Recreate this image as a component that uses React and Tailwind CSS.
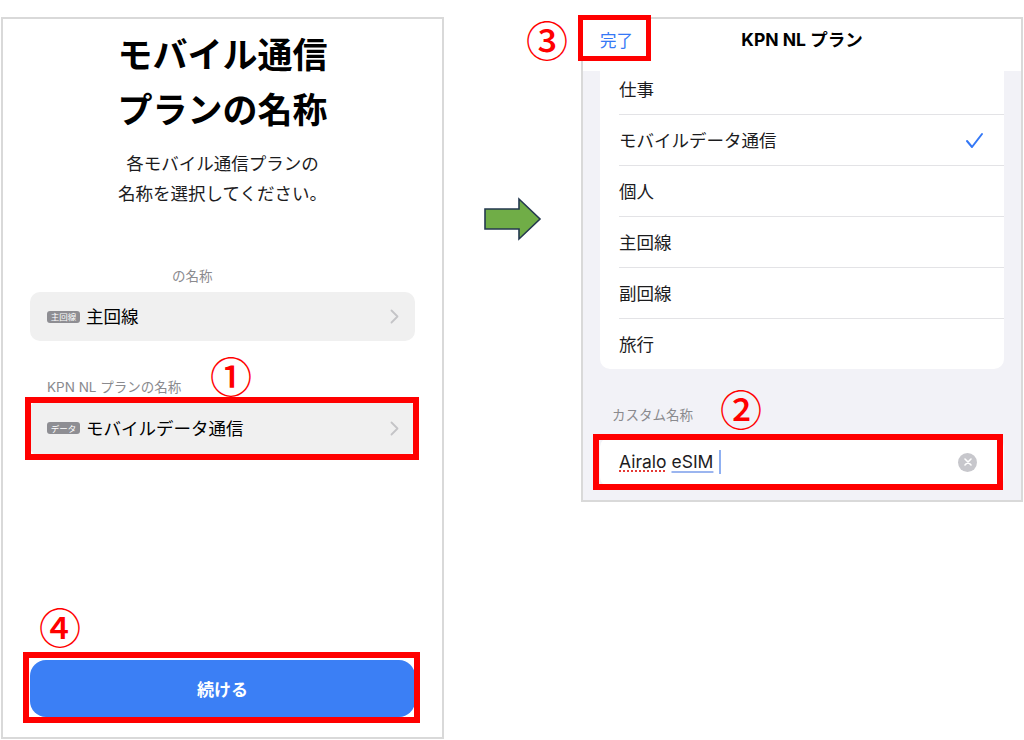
import React from "react";

const FONT = { fontFamily: 'Inter, "Noto Sans CJK JP", sans-serif' };
const JP = { fontFamily: '"Noto Sans CJK JP", sans-serif' };

function Chevron() {
  return (
    <svg width="9" height="15" viewBox="0 0 9 15" fill="none">
      <path d="M1.5 1.5 L7.5 7.5 L1.5 13.5" stroke="#c4c4c7" strokeWidth="1.8" strokeLinecap="round" strokeLinejoin="round" />
    </svg>
  );
}

function Badge({ children }) {
  return (
    <span className="inline-flex items-center justify-center h-[12px] w-[33px] rounded-[3px] bg-[#8e8e93] text-white text-[8.5px] leading-none mr-[6px]" style={JP}>
      {children}
    </span>
  );
}

function Circled({ ch, x, y }) {
  return (
    <span
      className="absolute flex items-center justify-center w-[44px] h-[44px] text-[#ff0000] text-[42px] font-medium leading-none"
      style={{ ...JP, left: x - 22, top: y - 22 }}
    >
      {ch}
    </span>
  );
}

function RedBox({ x, y, w, h, t }) {
  return (
    <div
      className="absolute border-[#ff0000]"
      style={{ left: x, top: y, width: w, height: h, borderWidth: t, borderStyle: "solid" }}
    />
  );
}

const items = ["仕事", "モバイルデータ通信", "個人", "主回線", "副回線", "旅行"];

export default function App() {
  return (
    <div className="relative w-[1024px] h-[740px] bg-white flex items-start overflow-hidden text-black" style={FONT}>
      {/* Left panel */}
      <div className="ml-[1px] mt-[17px] w-[443px] h-[722px] shrink-0 border-2 border-[#d9d9d9] flex flex-col px-[27px] pt-[6px] pb-[20px]">
        <div className="text-center font-bold text-[35px] leading-[55px]" style={JP}>
          <div>モバイル通信</div>
          <div>プランの名称</div>
        </div>
        <div className="mt-[13px] text-center text-[17.5px] leading-[30px] text-[#1c1c1e]" style={JP}>
          <div>各モバイル通信プランの</div>
          <div>名称を選択してください。</div>
        </div>
        <div className="mt-[58px] pl-[142px] text-[13.5px] leading-[18px] text-[#8a8a8e]" style={JP}>の名称</div>
        <div className="mt-[8px] h-[49px] rounded-[10px] bg-[#f0f0f0] flex items-center pl-[17px] pr-[16px]">
          <Badge>主回線</Badge>
          <span className="text-[17.5px]" style={JP}>主回線</span>
          <span className="ml-auto flex"><Chevron /></span>
        </div>
        <div className="mt-[37px] pl-[17px] text-[13.5px] leading-[18px] text-[#8a8a8e]" style={FONT}>KPN NL プランの名称</div>
        <div className="mt-[4px] h-[56px] rounded-[10px] bg-[#f0f0f0] flex items-center pl-[17px] pr-[16px]">
          <Badge>データ</Badge>
          <span className="text-[17.5px]" style={JP}>モバイルデータ通信</span>
          <span className="ml-auto flex"><Chevron /></span>
        </div>
        <div className="mt-auto h-[57px] rounded-[16px] bg-[#3b7ff5] flex items-center justify-center text-white font-bold text-[17px]" style={JP}>
          続ける
        </div>
      </div>

      {/* Arrow */}
      <div className="w-[137px] shrink-0 pl-[39px] pt-[197px]">
        <svg width="60" height="44" viewBox="0 0 60 44">
          <path d="M2 12 H36 V2 L57 22 L36 42 V32 H2 Z" fill="#70ad47" stroke="#24384f" strokeWidth="1.6" strokeLinejoin="miter" />
        </svg>
      </div>

      {/* Right panel */}
      <div className="mt-[17px] w-[442px] h-[485px] shrink-0 border-2 border-[#d9d9d9] bg-[#f2f2f7] flex flex-col">
        <div className="h-[52px] bg-white grid grid-cols-[1fr_auto_1fr] items-center pb-[10px] px-[17px]">
          <span className="text-[#3478f6] text-[16.5px]" style={JP}>完了</span>
          <span className="font-bold text-[17.5px]" style={FONT}>KPN NL プラン</span>
          <span />
        </div>
        <div className="mx-[17px] bg-white rounded-b-[10px] overflow-hidden">
          {items.map((t, i) => (
            <div key={t} className="pl-[19px]">
              <div
                className={
                  i === 0
                    ? "h-[43px] flex items-center pb-[6px] pr-[20px]"
                    : "h-[51px] flex items-center border-t border-[#e3e3e6] pr-[20px]"
                }
              >
                <span className="text-[17.5px] text-[#1c1c1e]" style={JP}>{t}</span>
                {i === 1 && (
                  <span className="ml-auto flex">
                    <svg width="19" height="17" viewBox="0 0 19 17" fill="none">
                      <path d="M2 9 L7 15 L17 2" stroke="#3478f6" strokeWidth="2" strokeLinecap="round" strokeLinejoin="round" />
                    </svg>
                  </span>
                )}
              </div>
            </div>
          ))}
        </div>
        <div className="mt-[36px] pl-[29px] text-[13.5px] leading-[18px] text-[#8a8a8e]" style={JP}>カスタム名称</div>
        <div className="mt-[14px] mx-[17px] h-[50px] bg-white rounded-[10px] flex items-center pl-[19px] pr-[27px]">
          <span className="text-[17.5px] text-[#1c1c1e]" style={FONT}>
            <span className="underline decoration-dotted decoration-[#e53935] decoration-2 underline-offset-[3px]">Airalo</span>{" "}
            <span className="underline decoration-[#9bb5ef] decoration-2 underline-offset-[3px]">eSIM</span>
          </span>
          <span className="ml-[6px] w-[2px] h-[24px] bg-[#8fb0f2]" />
          <span className="ml-auto w-[19px] h-[19px] rounded-full bg-[#c7c7cc] flex items-center justify-center">
            <svg width="8" height="8" viewBox="0 0 8 8">
              <path d="M1 1 L7 7 M7 1 L1 7" stroke="white" strokeWidth="1.6" strokeLinecap="round" />
            </svg>
          </span>
        </div>
      </div>

      {/* Annotations */}
      <RedBox x={578} y={15} w={73} h={46} t={5} />
      <RedBox x={593} y={434} w={410} h={56} t={6} />
      <RedBox x={25} y={397} w={394} h={63} t={6} />
      <RedBox x={23} y={652} w={397} h={71} t={6} />
      <Circled ch="③" x={547} y={39} />
      <Circled ch="②" x={741} y={408} />
      <Circled ch="①" x={231} y={375} />
      <Circled ch="④" x={60} y={626} />
    </div>
  );
}
